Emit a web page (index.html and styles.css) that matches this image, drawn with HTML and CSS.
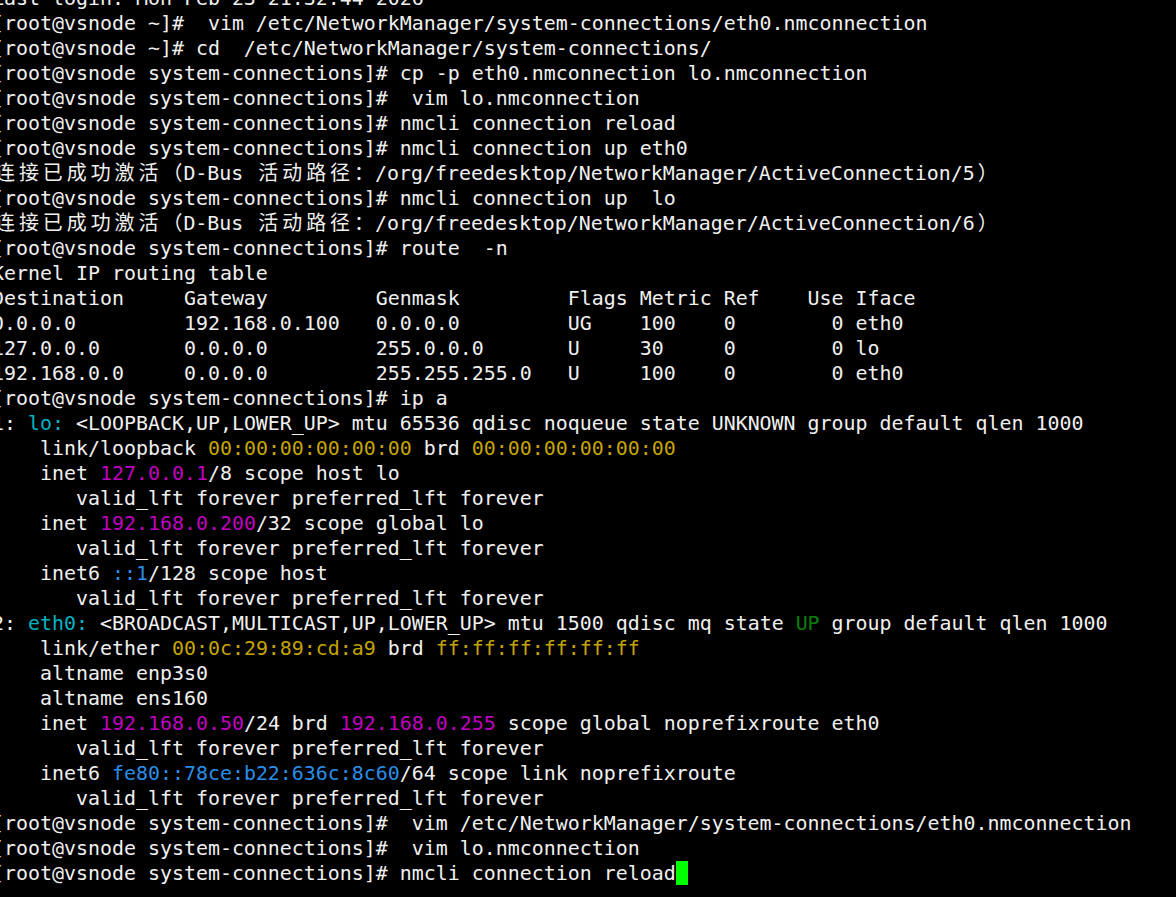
FILE: index.html
```html
<!DOCTYPE html>
<html lang="zh">
<head>
<meta charset="utf-8">
<title>Terminal</title>
<link rel="stylesheet" href="styles.css">
</head>
<body>
<div class="term">
<div class="ln">Last login: Mon Feb 23 21:32:44 2026</div>
<div class="ln">[root@vsnode ~]#  vim /etc/NetworkManager/system-connections/eth0.nmconnection</div>
<div class="ln">[root@vsnode ~]# cd  /etc/NetworkManager/system-connections/</div>
<div class="ln">[root@vsnode system-connections]# cp -p eth0.nmconnection lo.nmconnection</div>
<div class="ln">[root@vsnode system-connections]#  vim lo.nmconnection</div>
<div class="ln">[root@vsnode system-connections]# nmcli connection reload</div>
<div class="ln">[root@vsnode system-connections]# nmcli connection up eth0</div>
<div class="ln"><span class="cjk">连接已成功激活（</span>D-Bus <span class="cjk">活动路径：</span>/org/freedesktop/NetworkManager/ActiveConnection/5<span class="cjk">）</span></div>
<div class="ln">[root@vsnode system-connections]# nmcli connection up  lo</div>
<div class="ln"><span class="cjk">连接已成功激活（</span>D-Bus <span class="cjk">活动路径：</span>/org/freedesktop/NetworkManager/ActiveConnection/6<span class="cjk">）</span></div>
<div class="ln">[root@vsnode system-connections]# route  -n</div>
<div class="ln">Kernel IP routing table</div>
<div class="ln">Destination     Gateway         Genmask         Flags Metric Ref    Use Iface</div>
<div class="ln">0.0.0.0         192.168.0.100   0.0.0.0         UG    100    0        0 eth0</div>
<div class="ln">127.0.0.0       0.0.0.0         255.0.0.0       U     30     0        0 lo</div>
<div class="ln">192.168.0.0     0.0.0.0         255.255.255.0   U     100    0        0 eth0</div>
<div class="ln">[root@vsnode system-connections]# ip a</div>
<div class="ln">1: <span class="cyan">lo:</span> &lt;LOOPBACK,UP,LOWER_UP&gt; mtu 65536 qdisc noqueue state UNKNOWN group default qlen 1000</div>
<div class="ln">    link/loopback <span class="yellow">00:00:00:00:00:00</span> brd <span class="yellow">00:00:00:00:00:00</span></div>
<div class="ln">    inet <span class="mag">127.0.0.1</span>/8 scope host lo</div>
<div class="ln">       valid_lft forever preferred_lft forever</div>
<div class="ln">    inet <span class="mag">192.168.0.200</span>/32 scope global lo</div>
<div class="ln">       valid_lft forever preferred_lft forever</div>
<div class="ln">    inet6 <span class="blue">::1</span>/128 scope host</div>
<div class="ln">       valid_lft forever preferred_lft forever</div>
<div class="ln">2: <span class="cyan">eth0:</span> &lt;BROADCAST,MULTICAST,UP,LOWER_UP&gt; mtu 1500 qdisc mq state <span class="green">UP</span> group default qlen 1000</div>
<div class="ln">    link/ether <span class="yellow">00:0c:29:89:cd:a9</span> brd <span class="yellow">ff:ff:ff:ff:ff:ff</span></div>
<div class="ln">    altname enp3s0</div>
<div class="ln">    altname ens160</div>
<div class="ln">    inet <span class="mag">192.168.0.50</span>/24 brd <span class="mag">192.168.0.255</span> scope global noprefixroute eth0</div>
<div class="ln">       valid_lft forever preferred_lft forever</div>
<div class="ln">    inet6 <span class="blue">fe80::78ce:b22:636c:8c60</span>/64 scope link noprefixroute</div>
<div class="ln">       valid_lft forever preferred_lft forever</div>
<div class="ln">[root@vsnode system-connections]#  vim /etc/NetworkManager/system-connections/eth0.nmconnection</div>
<div class="ln">[root@vsnode system-connections]#  vim lo.nmconnection</div>
<div class="ln">[root@vsnode system-connections]# nmcli connection reload<span class="cursor"></span></div>
</div>
</body>
</html>
```

FILE: styles.css
```css
html, body {
  margin: 0;
  padding: 0;
  background: #000;
  width: 1176px;
  height: 897px;
  overflow: hidden;
}

.term {
  margin: -14px 0 0 -8px;
  font-family: "DejaVu Sans Mono", monospace;
  font-size: 19.93px;
  line-height: 25px;
  color: #f0f0f0;
}

.ln {
  height: 25px;
  white-space: pre;
}

.cjk {
  font-family: "Noto Sans CJK SC", sans-serif;
  letter-spacing: 4px;
  line-height: 0;
  padding-left: 3px;
  margin-right: -3px;
}

.cyan { color: #00b4c4; }
.yellow { color: #c4a400; }
.mag { color: #c000c0; }
.blue { color: #2a8ee8; }
.green { color: #0a800a; }

.cursor {
  display: inline-block;
  width: 12px;
  height: 24px;
  background: #00ff00;
  vertical-align: -5px;
}
```
